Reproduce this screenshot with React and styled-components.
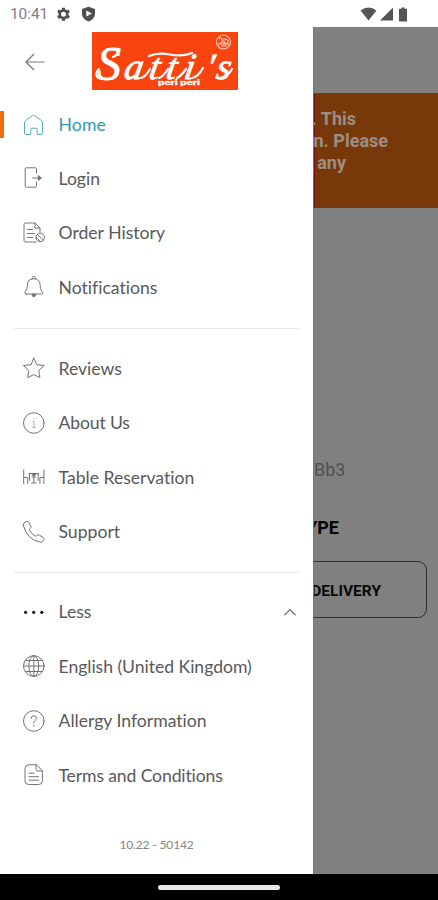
import React from "react";
import styled, { createGlobalStyle } from "styled-components";

const GlobalStyle = createGlobalStyle`
  * { box-sizing: border-box; }
  body { margin: 0; background: #fff; }
`;

const Screen = styled.div`
  display: grid;
  grid-template-rows: 27px 847px 26px;
  width: 438px;
  height: 900px;
  overflow: hidden;
  background: #fff;
  font-family: Lato, sans-serif;
`;

const StatusBar = styled.header`
  display: flex;
  align-items: center;
  padding: 1px 28px 0 10px;
  color: #555;
  font: 400 15.5px Roboto, sans-serif;
`;

const Clock = styled.span`
  width: 46px;
  color: #808080;
  letter-spacing: -0.1px;
`;

const StatusIcons = styled.div`
  display: flex;
  align-items: center;
  gap: ${(p) => p.$gap}px;
  margin-left: ${(p) => (p.$end ? "auto" : "0")};
`;

const Body = styled.div`
  display: grid;
  grid-template-columns: 313px 125px;
`;

const Drawer = styled.aside`
  display: flex;
  flex-direction: column;
  background: #fff;
`;

const DrawerHeader = styled.div`
  display: flex;
  height: 70px;
  padding: 5px 0 0 25px;
`;

const BackButton = styled.button`
  display: flex;
  width: 67px;
  height: 60px;
  padding: 0;
  align-items: center;
  border: 0;
  background: none;
`;

const Logo = styled.svg`
  display: block;
  width: 146px;
  height: 58px;
  background: #fa4410;
`;

const Group = styled.nav`
  display: flex;
  flex-direction: column;
  height: ${(p) => p.$height}px;
  padding-top: ${(p) => p.$top}px;
`;

const Row = styled.a`
  display: flex;
  flex: none;
  align-items: center;
  height: ${(p) => (p.$active ? 53 : 54.5)}px;
  padding: 0 16px 0 22px;
  color: ${(p) => (p.$active ? "#3495b3" : "#595959")};
  font-size: 17.6px;
  background: linear-gradient(#f36c0c, #f36c0c) 0 50% / ${(p) => (p.$active ? "4px 27px" : "0 0")} no-repeat;
`;

const IconBox = styled.span`
  display: flex;
  width: 24px;
  margin-right: 12.5px;
  color: ${(p) => (p.$active ? "#5aa9c0" : "#747474")};
`;

const Label = styled.span`
  flex: 1;
  white-space: nowrap;
  letter-spacing: ${(p) => p.$track || 0}px;
  font-variant-ligatures: none;
`;

const Divider = styled.hr`
  width: ${(p) => p.$width}px;
  height: 1px;
  margin: 0 0 0 14px;
  border: 0;
  background: #e9e9e9;
`;

const Version = styled.footer`
  padding-top: 33px;
  color: #858585;
  font-size: 12px;
  line-height: 18px;
  letter-spacing: -0.15px;
  text-align: center;
`;

const Page = styled.main`
  display: flex;
  flex-direction: column;
  overflow: hidden;
  background: #808080;
  border-left: 1px solid #777;
  font-family: Roboto, sans-serif;
`;

const Notice = styled.section`
  display: flex;
  flex-direction: column;
  height: 115px;
  margin-top: 66px;
  padding-top: 15px;
  background: #77390a;
  border-left: 1px solid #760f08;
  color: #9b8d84;
  font-size: 18px;
  font-weight: 700;
  line-height: 22px;
`;

const NoticeLine = styled.span`
  align-self: flex-end;
  margin-right: ${(p) => p.$right}px;
  white-space: nowrap;
`;

const Postcode = styled.div`
  margin: 250px 95px 0 0;
  color: #525252;
  font-size: 18px;
  line-height: 24px;
  text-align: right;
`;

const Heading = styled.h2`
  display: flex;
  justify-content: flex-end;
  margin: 34px 99px 0 0;
  color: #050505;
  font-size: 18px;
  font-weight: 700;
  line-height: 24px;
`;

const DeliveryButton = styled.button`
  display: flex;
  align-items: center;
  justify-content: flex-end;
  width: 113px;
  height: 57px;
  margin-top: 21px;
  padding: 2px 45px 0 0;
  border: 1px solid #303030;
  border-left: 0;
  border-radius: 0 9px 9px 0;
  background: transparent;
  color: #090909;
  font: 700 15.5px Roboto, sans-serif;
`;

const NavBar = styled.div`
  display: flex;
  align-items: center;
  justify-content: center;
  background: #000;
`;

const Handle = styled.div`
  width: 122px;
  height: 5px;
  border-radius: 3px;
  background: #e8e8e8;
`;

const Line = ({ children, width = 24, height = 24, stroke = 1 }) => (
  <svg width={width} height={height} viewBox="0 0 24 24" fill="none" stroke="currentColor" strokeWidth={stroke} strokeLinecap="round" strokeLinejoin="round">
    {children}
  </svg>
);

const icons = {
  home: <path d="M2.5 9.1q0-.8.7-1.3l7.2-5.2q1.1-.8 2.2 0l7.2 5.2q.7.5.7 1.3v11.2q0 1.2-1.2 1.2h-4.1v-5.3q0-1-1-1h-4.4q-1 0-1 1v5.3H3.7q-1.2 0-1.2-1.2z" />,
  login: <><path d="M14.5 7V2.8q0-1-1-1H4.2q-1 0-1 1v17.4q0 1 1 1h9.3q1 0 1-1V16" /><path d="M10.5 12h8" /><path d="m16.5 9.8 3 2.2-3 2.2z" fill="currentColor" /></>,
  order: <><path d="M18 11V7l-5-5H3.5q-1.5 0-1.5 1.5v16Q2 21 3.5 21H14M13 2v5h5M5.5 8.5h5M5.5 12.5h7M5.5 16.5h5" /><circle cx="18.2" cy="16.4" r="4.3" /><path d="m15.3 13.4 6 6M14 16l4.5 4.5" /></>,
  bell: <><path d="M4.1 19h15.4q1.5 0 1.2-1.5-.1-.7-1-1.6-1.6-1.9-1.6-5.6Q18.1 4 11.8 3.7 5.4 4 5.4 10.3q0 3.7-1.6 5.6-.8.9-1 1.6Q2.6 19 4.1 19z" /><path d="M10.3 3.8V2.5q0-1 1.5-1t1.5 1v1.3" /><path d="M10 19.5q0 2.2 1.8 2.2t1.8-2.2z" fill="currentColor" /></>,
  star: <path d="m11.8 2.1 2.9 6.6 7.5.8-5.4 4.9 1.1 7.3-6.1-3.1-6.1 3.1 1.1-7.3-5.4-4.9 7.5-.8z" />,
  info: <><circle cx="11.8" cy="12" r="10.3" /><path d="M11 10.5h1v6M11 16.5h2" stroke="#aaa" /><circle cx="12" cy="7.5" r=".7" fill="#aaa" stroke="none" /></>,
  table: <><path d="M1.7 5v13.5M1.7 12.5h4v6M21.9 5v13.5M21.9 12.5h-4v6M7 8.5h9.6M7.5 8.5v7M16.1 8.5v7M10 12h3.6M11.8 12v5.8M9.5 18h4.6" /><path d="m9.3 8.5 2.5 3 2.5-3" fill="currentColor" /></>,
  phone: <path d="M2.6 2.5 4.5 1.6q1.5-.6 2.3.8l2 3.7q.7 1.4-.5 2.4L7.2 9.6q1.9 4.3 6.5 6.8l1.3-1.1q1.1-1 2.3-.2l3.8 2.2q1.4.9.7 2.3l-.9 1.7q-.7 1.1-2.2.9Q5.2 20.1 1.2 5q-.3-1.8 1.4-2.5z" />,
  dots: <g fill="#111" stroke="none"><circle cx="3.6" cy="12.3" r="1.6" /><circle cx="11.7" cy="12.3" r="1.6" /><circle cx="19.8" cy="12.3" r="1.6" /></g>,
  globe: <><circle cx="11.8" cy="12" r="10.3" /><ellipse cx="11.8" cy="12" rx="4.9" ry="10.3" /><path d="M1.5 12h20.6M3.3 6.5h17M3.3 17.5h17M11.8 1.7v20.6" /></>,
  help: <><circle cx="11.8" cy="12" r="10.3" /><path d="M9 9.5q.2-2.7 2.8-2.7t2.8 2.5q0 1.2-1.7 2.3-1.1.7-1.1 2.3" /><circle cx="11.8" cy="16.7" r=".8" fill="currentColor" stroke="none" /></>,
  terms: <><path d="M14 1.8H6.7Q3 1.8 3 5.5v12.3q0 3.7 3.7 3.7h10q3.7 0 3.7-3.7V8zM14 1.8v4.5Q14 8 15.7 8h4.7" /><path d="M7 10.2h5M7 13.7h9.6M7 17.2h9.6" /></>,
};

const MenuRow = ({ icon, text, active, track, more }) => (
  <Row $active={active}>
    <IconBox $active={active}><Line>{icons[icon]}</Line></IconBox>
    <Label $track={track}>{text}</Label>
    {more && <Line width={14} height={14} stroke={1.8}><path d="m3 17 9-9 9 9" /></Line>}
  </Row>
);

const BrandLogo = () => (
  <Logo viewBox="0 0 146 58">
    <g fill="#fff" stroke="#fff" strokeWidth=".8" strokeLinejoin="round" fontFamily="Liberation Serif, serif" fontStyle="italic">
      <text x="5" y="47.5" fontSize="48">S</text>
      <text transform="translate(31 47) skewX(-10)" fontSize="37" x="0 25 42 60">atti</text>
      <text transform="translate(112 47) skewX(-10)" fontSize="37" x="0 11">'s</text>
    </g>
    <g fill="none" stroke="#fff" strokeWidth="2.2" strokeLinecap="round">
      <path d="M57 24q9-4 21-1.5t22-1.5" />
      <path d="M25 17q2 6-4 8M7 37q-5 5-1 9" />
      <path d="M48 46q5 0 10-9M67 46q4-1 9-9M85 46q4-2 9-9M100 46q6-1 11-10M127 46q9-1 13-9" />
    </g>
    <text x="66" y="53" fill="#fff" stroke="#fff" strokeWidth=".3" fontFamily="Lato, sans-serif" fontSize="6.5" fontWeight="900" textLength="42" lengthAdjust="spacingAndGlyphs">peri peri</text>
    <g fill="none" stroke="#ffd3c3" strokeWidth="1.1">
      <circle cx="131.5" cy="10" r="7" />
      <path d="M127 7q2-3 3 1t-3 3M132 6v5q3 1 4-1t-3-3M126 12h11M129 14h6" />
    </g>
  </Logo>
);

export default function App() {
  return (
    <Screen>
      <GlobalStyle />
      <StatusBar>
        <Clock>10:41</Clock>
        <StatusIcons $gap={10}>
          <svg width="15" height="15" viewBox="0 0 24 24" fill="#505050" fillRule="evenodd"><path d="M9.7 1h4.6l.6 3 2 1.1 2.9-1 2.3 4-2.3 2v2.8l2.3 2-2.3 4-2.9-1-2 1.1-.6 3H9.7l-.6-3-2-1.1-2.9 1-2.3-4 2.3-2v-2.8l-2.3-2 2.3-4 2.9 1 2-1.1zM12 7.7a4 4 0 1 0 0 8 4 4 0 0 0 0-8z" /></svg>
          <svg width="15" height="16" viewBox="0 0 15 16"><path d="M7.5.8 14 3v5q0 5-6.5 7.6Q1 13 1 8V3z" fill="#505050" /><path d="M5.3 4.5v6l5.6-3z" fill="#fff" /></svg>
        </StatusIcons>
        <StatusIcons $gap={3} $end>
          <svg width="17" height="14" viewBox="0 0 17 14"><path d="M.5 3.5Q8.5-2.5 16.5 3.5L8.5 13.5z" fill="#555" /></svg>
          <svg width="13" height="14" viewBox="0 0 13 14"><path d="M13 .5v13H0z" fill="#555" /></svg>
          <svg width="14" height="15" viewBox="0 0 14 15"><path d="M5.5.5h3v1.3H11v12.7H3V1.8h2.5z" fill="#555" /></svg>
        </StatusIcons>
      </StatusBar>
      <Body>
        <Drawer>
          <DrawerHeader>
            <BackButton aria-label="Back">
              <svg width="20" height="18" viewBox="0 0 20 18" fill="none" stroke="#777" strokeWidth="1.2"><path d="M19.5 9H1M9 1 1 9l8 8" /></svg>
            </BackButton>
            <BrandLogo />
          </DrawerHeader>
          <Group $height={231} $top={1}>
            <MenuRow icon="home" text="Home" active track={0.15} />
            <MenuRow icon="login" text="Login" />
            <MenuRow icon="order" text="Order History" />
            <MenuRow icon="bell" text="Notifications" />
          </Group>
          <Divider $width={285} />
          <Group $height={243} $top={12}>
            <MenuRow icon="star" text="Reviews" />
            <MenuRow icon="info" text="About Us" track={-0.15} />
            <MenuRow icon="table" text="Table Reservation" />
            <MenuRow icon="phone" text="Support" />
          </Group>
          <Divider $width={285} />
          <Group $height={230} $top={11.5}>
            <MenuRow icon="dots" text="Less" more />
            <MenuRow icon="globe" text="English (United Kingdom)" track={-0.03} />
            <MenuRow icon="help" text="Allergy Information" />
            <MenuRow icon="terms" text="Terms and Conditions" track={-0.13} />
          </Group>
          <Version>10.22 - 50142</Version>
        </Drawer>
        <Page>
          <Notice>
            <NoticeLine $right={82}>. This</NoticeLine>
            <NoticeLine $right={50}>n. Please</NoticeLine>
            <NoticeLine $right={92}>any</NoticeLine>
          </Notice>
          <Postcode>Bb3</Postcode>
          <Heading>YPE</Heading>
          <DeliveryButton>DELIVERY</DeliveryButton>
        </Page>
      </Body>
      <NavBar><Handle /></NavBar>
    </Screen>
  );
}
